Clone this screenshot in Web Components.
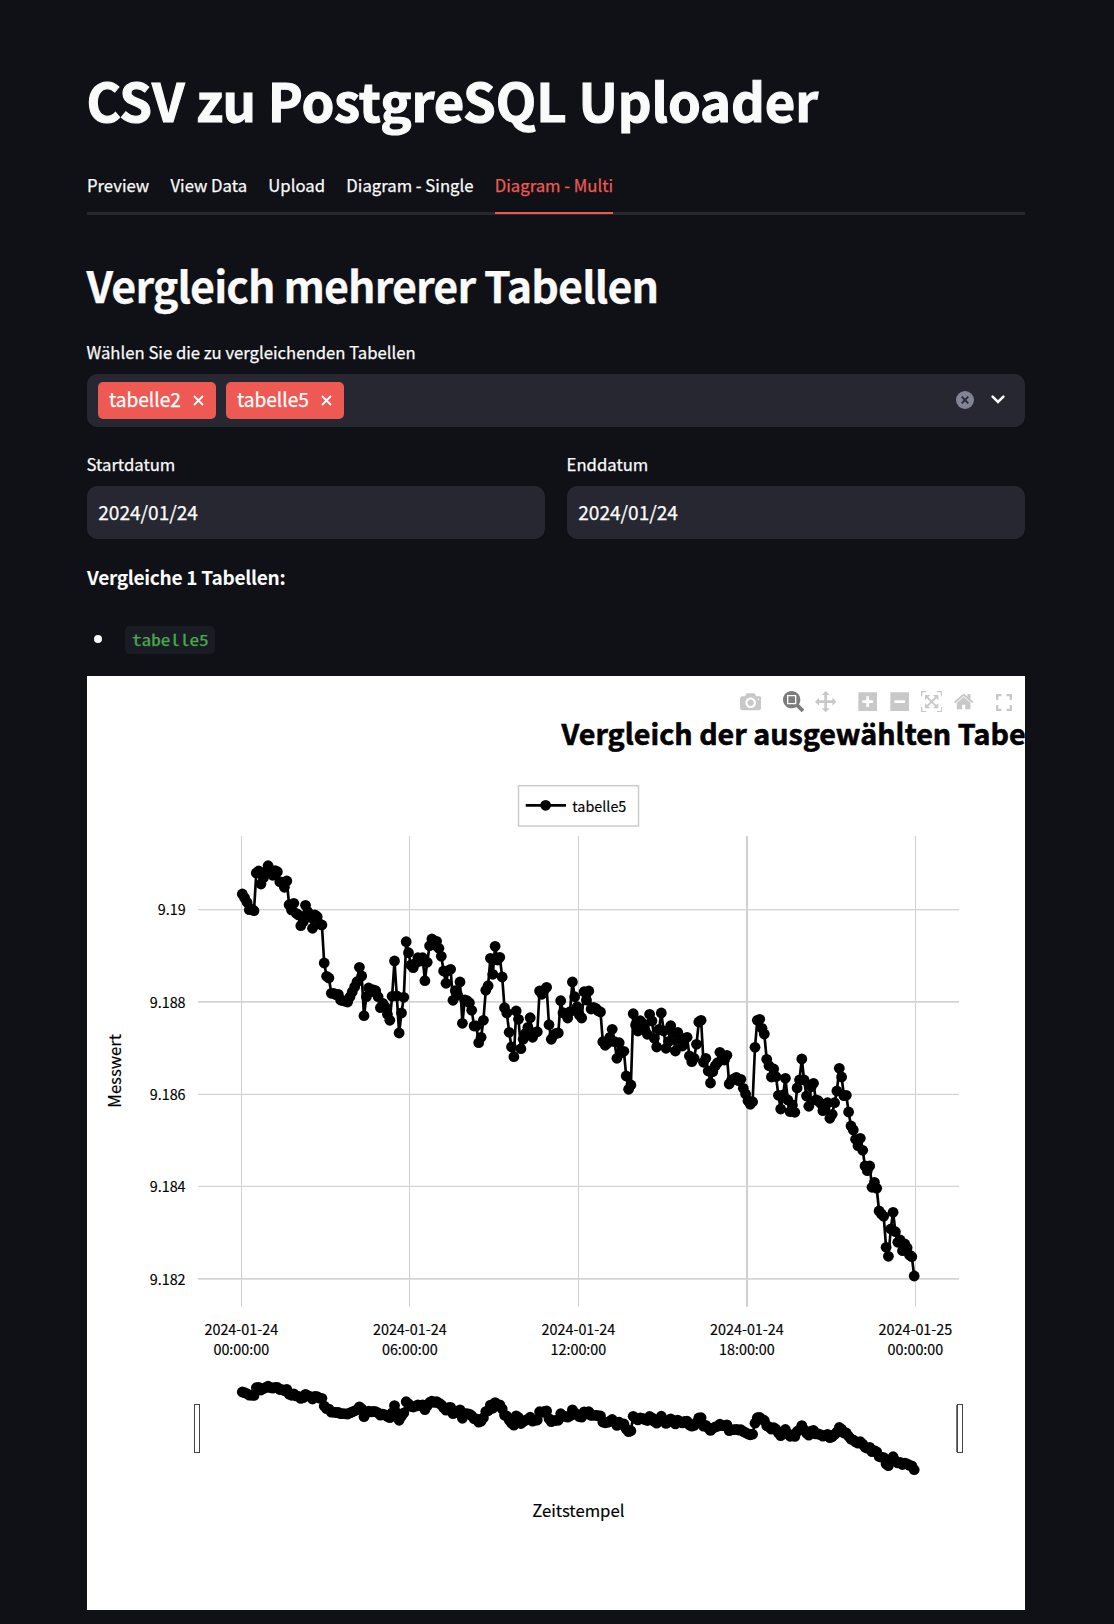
<!DOCTYPE html>
<html lang="de">
<head>
<meta charset="utf-8">
<title>CSV zu PostgreSQL Uploader</title>
<style>
  html, body { margin: 0; background: #0f1116; }
  body { font-family: "Noto Sans CJK SC", "Noto Sans", sans-serif; color: #fafafa; -webkit-text-stroke: 0.25px currentColor; }
</style>
</head>
<body>
<uploader-app></uploader-app>
<script>
const define = (name, html, setup) => customElements.define(name, class extends HTMLElement {
  connectedCallback() {
    if (this.shadowRoot) return;
    this.attachShadow({ mode: "open" }).innerHTML = html;
    if (setup) setup(this, this.shadowRoot);
  }
});

define("page-title", `
<style>
  :host { display: block; margin: 70px 0 0 -0.5px; height: 60px; font-size: 52.6px; line-height: 59px; font-weight: 700; white-space: nowrap; letter-spacing: -0.08px; -webkit-text-stroke: 1.1px currentColor; }
</style><slot></slot>`);

define("tab-item", `
<style>
  :host { display: block; box-sizing: border-box; height: 56px; line-height: 55px; font-size: 16.7px; white-space: nowrap; border-bottom: 2px solid transparent; -webkit-text-stroke: 0.25px currentColor; }
  :host([active]) { color: #ee5a53; border-color: #ee5a53; }
</style><slot></slot>`);

define("tab-bar", `
<style>
  :host { display: flex; gap: 21.3px; height: 57px; margin-top: 28px; box-shadow: inset 0 -3px #26282d; }
</style><slot></slot>`);

define("section-title", `
<style>
  :host { display: block; margin: 41px 0 0 -0.5px; height: 56px; line-height: 56px; font-size: 43px; font-weight: 600; white-space: nowrap; letter-spacing: -0.92px; }
</style><slot></slot>`);

define("field-label", `
<style>
  :host { display: block; height: 28px; line-height: 28px; font-size: 16.7px; margin: 0 0 8px -0.4px; white-space: nowrap; }
</style><slot></slot>`);

define("tag-chip", `
<style>
  :host { display: flex; align-items: center; box-sizing: border-box; width: 118px; height: 37px; padding-left: 11px; border-radius: 5px; background: #ee5a53; font-size: 19.1px; line-height: 34px; color: #fff; -webkit-text-stroke: 0.25px #fff; }
  span { width: 84.2px; height: 37px; }
  svg { display: block; margin-top: -1px; }
</style>
<span><slot></slot></span>
<svg width="11" height="11" viewBox="0 0 11 11"><path d="M1 1 10 10M10 1 1 10" stroke="#fff" stroke-width="1.9" fill="none"/></svg>`);

define("multi-select", `
<style>
  :host { display: flex; align-items: center; box-sizing: border-box; height: 53px; padding: 0 20px 0 11px; border-radius: 10.6px; background: #262730; }
  .tags { display: flex; gap: 10px; flex: 1; }
  svg { display: block; margin-top: -1px; }
  .clear { margin-right: 17px; }
</style>
<div class="tags"><slot></slot></div>
<svg class="clear" width="18" height="18" viewBox="0 0 18 18"><circle cx="9" cy="9" r="9" fill="#808495"/><path d="M5.7 5.7l6.6 6.6M12.3 5.7l-6.6 6.6" stroke="#262730" stroke-width="1.8"/></svg>
<svg width="14" height="10" viewBox="0 0 14 10"><path d="M1.6 1.6 7 7 12.4 1.6" fill="none" stroke="#fafafa" stroke-width="2.5" stroke-linecap="round"/></svg>`);

define("date-field", `
<style>
  :host { display: block; flex: 1; }
  .box { box-sizing: border-box; height: 53px; line-height: 53.5px; padding-left: 11.2px; border-radius: 10.6px; background: #262730; font-size: 19.1px; }
</style>
<field-label></field-label><div class="box"><slot></slot></div>`,
(host, root) => { root.querySelector("field-label").textContent = host.getAttribute("label"); });

define("compare-list", `
<style>
  :host { display: block; }
  .head { margin-top: 21px; height: 32px; line-height: 35px; font-size: 19.1px; font-weight: 600; letter-spacing: -0.3px; -webkit-text-stroke: 0; }
  .row { display: flex; align-items: center; margin-top: 34px; height: 28px; padding-left: 7px; }
  .dot { width: 8px; height: 8px; border-radius: 50%; background: #fafafa; margin: -3px 23px 0 0; }
  code { box-sizing: border-box; height: 28px; width: 90px; padding-left: 7px; border-radius: 5px; background: #1a1c24; color: #4ba74f; font: 15.4px/27px "Noto Sans Mono CJK SC", "Liberation Mono", monospace; }
  code span { display: inline-block; transform: scaleX(1.245); transform-origin: 0 50%; }
</style>
<div class="head"><slot name="head"></slot></div>
<div class="row"><div class="dot"></div><code><span><slot></slot></span></code></div>`);

const ICONS = {
  camera: [1000, "m500 450c-83 0-150-67-150-150 0-83 67-150 150-150 83 0 150 67 150 150 0 83-67 150-150 150z m400 150h-120c-16 0-34 13-39 29l-31 93c-6 15-23 28-40 28h-340c-16 0-34-13-39-28l-31-94c-6-15-23-28-40-28h-120c-55 0-100-45-100-100v-450c0-55 45-100 100-100h800c55 0 100 45 100 100v450c0 55-45 100-100 100z m-400-550c-138 0-250 112-250 250 0 138 112 250 250 250 138 0 250-112 250-250 0-138-112-250-250-250z m365 380c-19 0-35 16-35 35 0 19 16 35 35 35 19 0 35-16 35-35 0-19-16-35-35-35z"],
  zoombox: [1000, "m1000-25l-250 251c40 63 63 138 63 218 0 224-182 406-407 406-224 0-406-182-406-406s183-406 407-406c80 0 155 22 218 62l250-250 125 125z m-812 250l0 438 437 0 0-438-437 0z m62 375l313 0 0-312-313 0 0 312z"],
  pan: [1000, "m1000 350l-187 188 0-125-250 0 0 250 125 0-188 187-187-187 125 0 0-250-250 0 0 125-188-188 186-187 0 125 252 0 0-250-125 0 187-188 188 188-125 0 0 250 250 0 0-126 187 188z"],
  plus: [875, "m1 787l0-875 875 0 0 875-875 0z m687-500l-187 0 0-187-125 0 0 187-188 0 0 125 188 0 0 187 125 0 0-187 187 0 0-125z"],
  minus: [875, "m0 788l0-876 875 0 0 876-875 0z m688-500l-500 0 0 125 500 0 0-125z"],
  autoscale: [1000, "m250 850l-187 0-63 0 0-62 0-188 63 0 0 188 187 0 0 62z m688 0l-188 0 0-62 188 0 0-188 62 0 0 188 0 62-62 0z m-875-938l0 188-63 0 0-188 0-62 63 0 187 0 0 62-187 0z m875 188l0-188-188 0 0-62 188 0 62 0 0 62 0 188-62 0z m-125 188l-1 0-93-94-156 156 156 156 92-93 2 0 0 250-250 0 0-2 93-92-156-156-156 156 94 92 0 2-250 0 0-250 0 0 93 93 157-156-157-156-93 94 0 0 0-250 250 0 0 0-94 93 156 157 156-157-93-93 0 0 250 0 0 250z"],
  home: [928.6, "m786 296v-267q0-15-11-26t-25-10h-214v214h-143v-214h-214q-15 0-25 10t-11 26v267q0 1 0 2t0 2l321 264 321-264q1-1 1-4z m124 39l-34-41q-5-5-12-6h-2q-7 0-12 3l-386 322-386-322q-7-4-13-4-7 2-12 7l-35 41q-4 5-3 13t6 12l401 334q18 15 42 15t43-15l136-114v109q0 8 5 13t13 5h107q8 0 13-5t5-13v-227l122-102q5-5 6-12t-4-13z"]
};

define("mode-icon", `
<style>
  :host { display: block; padding: 0 5.33px; height: 21.3px; }
  :host([name="pan"]) { padding: 0 4.66px 0 6px; }
  svg { display: block; }
  path { fill: #c8c8c8; }
  :host([active]) path { fill: #7c7c7c; }
</style>
<svg width="21.3" height="21.3"><path transform="matrix(1 0 0 -1 0 850)"/></svg>`,
(host, root) => {
  const [w, d] = ICONS[host.getAttribute("name")];
  root.querySelector("svg").setAttribute("viewBox", `0 0 ${w} 1000`);
  root.querySelector("path").setAttribute("d", d);
});

define("mode-bar", `
<style>
  :host { display: flex; align-items: flex-start; gap: 10.65px; }
  div { display: flex; }
  .full { padding: 2.7px 0 0 5.8px; }
  svg { display: block; }
</style>
<div><mode-icon name="camera"></mode-icon></div>
<div><mode-icon name="zoombox" active></mode-icon><mode-icon name="pan"></mode-icon></div>
<div><mode-icon name="plus"></mode-icon><mode-icon name="minus"></mode-icon><mode-icon name="autoscale"></mode-icon><mode-icon name="home"></mode-icon></div>
<div class="full"><svg width="16" height="17" viewBox="0 0 16 17"><path d="M1.2 6V1.2H5.5M10.5 1.2H14.8V6M14.8 11V15.8H10.5M5.5 15.8H1.2V11" fill="none" stroke="#c8c8c8" stroke-width="2.3"/></svg></div>`);

/* Five-minute readings as height on the canvas, in thirds of a pixel from each group's base line */
const SERIES = [
  [840, [162,173,187,209,207,212,99,93,132,113,95,77,98,106,92,95,125,128,142,123,194,210,190,220,225,257,245,196,215,232,265,225,230,252,255,369,409,414,460,460,464,463,480,482,484,486,470,455,440,425,382,408,527,470,444,455,450,452,470,503,490,500,523,541,469,363,468,579,519,472]],
  [900, [125,158,195,203,190,173,183,173,242,187,137,117,135,124,145,169,213,250,212,208,301,272,285,246,370,300,302,308,331,378,378,428,412,361,271,257,175,223,139,180,172,231,323,339,397,441,470,333,358,446,418,400,382,353,412,398,395,273,283,270,262,374,418,405,400,399,302,338,342,354,335]],
  [950, [96,140,170,195,204,125,150,123,177,172,175,182,186,275,286,280,262,238,275,325,278,308,304,378,418,405,191,225,243,212,220,240,253,193,213,265,291,238,189,243,295,275,227,250,303,247,270,288,265,262,318,335,325,283,216]],
  [980, [121,247,235,273,309,275,258,248,217,238,240,226,312,300,297,292,302,298,325,342,362,373,365,202,121,118,145,162,238,257,291,267,290,346,387,345,295,360,395,375,397,324,300,237,300,348,379,320,310,360,362,370,392,380,368,415,403,368,333,265,291,347,346,396,438,450,478,497,475,511,558,572,558,622,607,625,693,702,709,802,829,747,697,755,787,780,812,792,803,825,830,888]]
].flatMap(([base, v]) => v.map(y => base + y / 3));

define("line-chart", `
<style>
  :host { display: block; width: 938px; height: 934px; overflow: hidden; background: #fff; position: relative; -webkit-text-stroke: 0; }
  mode-bar { position: absolute; left: 647.6px; top: 14.9px; }
  svg { display: block; }
  text { font-family: "Noto Sans CJK SC", "Noto Sans", sans-serif; fill: #000; stroke: #000; stroke-width: 0.15px; }
</style>
<svg width="938" height="934" viewBox="87 676 938 934"></svg>
<mode-bar></mode-bar>`,
(host, root) => {
  const out = [];
  const rect = (x, y, w, h, c) => out.push(`<rect x="${x}" y="${y}" width="${w}" height="${h}" fill="${c}"/>`);
  const text = (x, y, s, size, anchor = "middle", extra = "") =>
    out.push(`<text x="${x}" y="${y}" font-size="${size}" text-anchor="${anchor}" ${extra}>${s}</text>`);

  [[241, 1], [409, 1], [578, 1], [746, 2], [915, 1]].forEach(([x, w]) => rect(x, 836, w, 470.7, "#d0d0d0"));
  [["9.19", 909, 1.3, 909.3], ["9.188", 1001, 1.7, 1001.7], ["9.186", 1093.8, 1.2, 1094.1], ["9.184", 1185.8, 1.2, 1186.2], ["9.182", 1278, 1.7, 1278.7]].forEach(([label, y, h, c]) => {
    rect(198, y, 761, h, "#d3d3d3");
    text(185.6, c + 5.8, label, 14.35, "end");
  });

  const draw = map => {
    const pts = SERIES.map((y, i) => [(242.3 + i * 2.341).toFixed(1), map(y).toFixed(1)]);
    out.push(`<polyline points="${pts.join(" ")}" fill="none" stroke="#000" stroke-width="2.67" stroke-linejoin="round"/>`);
    pts.forEach(([x, y]) => out.push(`<circle cx="${x}" cy="${y}" r="5.4"/>`));
  };
  draw(y => y);
  draw(y => 1392 + (y - 894) * 0.2034);

  [["2024-01-24", "00:00:00", 241.3], ["2024-01-24", "06:00:00", 409.8], ["2024-01-24", "12:00:00", 578.4], ["2024-01-24", "18:00:00", 746.9], ["2024-01-25", "00:00:00", 915.4]].forEach(([d, t, x]) => {
    text(x, 1335.3, d, 14.35);
    text(x, 1355.3, t, 14.35);
  });

  out.push(`<rect x="194.5" y="1404.5" width="5" height="48" fill="#fff" stroke="#444"/>`);
  out.push(`<rect x="957.5" y="1404.5" width="5" height="48" fill="#fff" stroke="#444"/>`);
  rect(956, 1405, 1, 47, "#777");

  text(578.4, 1517, "Zeitstempel", 16.7);
  text(0, 0, "Messwert", 16.7, "middle", `transform="translate(121 1070.8) rotate(-90)"`);
  text(561.6, 745, "Vergleich der ausgewählten Tabellen", 28.7, "start", `font-weight="700" style="stroke-width:0.6px"`);

  out.push(`<rect x="518.5" y="785.7" width="120" height="40.3" fill="#fff" stroke="#ccc" stroke-width="1.5"/>`);
  out.push(`<path d="M525.7 805.3H566" stroke="#000" stroke-width="2.67"/><circle cx="545.6" cy="805.3" r="5.4"/>`);
  text(572.3, 812, "tabelle5", 14.35, "start");

  root.querySelector("svg").innerHTML = out.join("");
});

define("uploader-app", `
<style>
  :host { display: flex; flex-direction: column; box-sizing: border-box; width: 1114px; height: 1624px; padding: 0 89px 0 87px; overflow: hidden; background: #0f1116; }
  .tables { margin-top: 26px; }
  .dates { display: flex; gap: 22px; margin-top: 23px; }
  line-chart { margin-top: 22px; }
</style>
<page-title>CSV zu PostgreSQL Uploader</page-title>
<tab-bar>
  <tab-item>Preview</tab-item><tab-item>View Data</tab-item><tab-item>Upload</tab-item><tab-item>Diagram - Single</tab-item><tab-item active>Diagram - Multi</tab-item>
</tab-bar>
<section-title>Vergleich mehrerer Tabellen</section-title>
<div class="tables">
  <field-label>Wählen Sie die zu vergleichenden Tabellen</field-label>
  <multi-select><tag-chip>tabelle2</tag-chip><tag-chip>tabelle5</tag-chip></multi-select>
</div>
<div class="dates">
  <date-field label="Startdatum">2024/01/24</date-field>
  <date-field label="Enddatum">2024/01/24</date-field>
</div>
<compare-list><span slot="head">Vergleiche 1 Tabellen:</span>tabelle5</compare-list>
<line-chart></line-chart>`);
</script>
</body>
</html>
